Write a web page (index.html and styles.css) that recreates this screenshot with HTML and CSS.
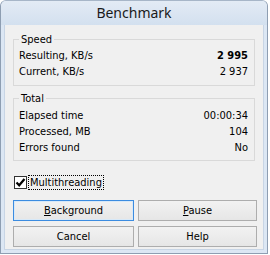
FILE: index.html
```html
<!DOCTYPE html>
<html>
<head>
<meta charset="utf-8">
<link rel="stylesheet" href="styles.css">
</head>
<body>
<div class="window">
  <div class="titlebar">Benchmark</div>
  <div class="body">
    <fieldset class="group group-speed">
      <legend>Speed</legend>
      <div class="row"><span>Resulting, KB/s</span><span class="strong">2 995</span></div>
      <div class="row"><span>Current, KB/s</span><span>2 937</span></div>
    </fieldset>
    <fieldset class="group group-total">
      <legend>Total</legend>
      <div class="row"><span>Elapsed time</span><span>00:00:34</span></div>
      <div class="row"><span>Processed, MB</span><span>104</span></div>
      <div class="row"><span>Errors found</span><span>No</span></div>
    </fieldset>
    <div class="check">
      <span class="box"><svg width="11" height="11" viewBox="0 0 11 11"><path d="M1.5 5.5 L4.2 8.3 L9.5 2" fill="none" stroke="#000" stroke-width="2.2"/></svg></span>
      <span class="check-label">Multithreading</span>
    </div>
    <div class="buttons">
      <button class="btn btn-default"><u>B</u>ackground</button>
      <button class="btn"><u>P</u>ause</button>
      <button class="btn">Cancel</button>
      <button class="btn">Help</button>
    </div>
  </div>
</div>
</body>
</html>
```
FILE: styles.css
```css
html, body {
  margin: 0;
  padding: 0;
  background: #ffffff;
}
body {
  font-family: "DejaVu Sans Condensed", "DejaVu Sans", sans-serif;
  font-size: 11px;
  color: #000;
}
.window {
  width: 268px;
  height: 254px;
  box-sizing: border-box;
  border: 1px solid #8e9eb2;
  border-top-color: #a7b6c8;
  border-radius: 6px 6px 0 0;
  background: #dce7f4;
  display: flex;
  flex-direction: column;
}
.titlebar {
  height: 24px;
  flex: none;
  background: linear-gradient(#e3ebf5, #d3e0ef);
  border-radius: 5px 5px 0 0;
  font-family: "Noto Sans", sans-serif;
  font-size: 14px;
  line-height: 24px;
  text-align: center;
  color: #1a1a1a;
}
.body {
  flex: 1;
  margin: 0 3px 3px 3px;
  background: #f0f0f0;
  border: 1px solid #c8d5e5;
  border-top: none;
  padding: 8px 8px 0 8px;
  display: flex;
  flex-direction: column;
}
.group {
  margin: 0;
  padding: 2px 6px 5px 5px;
  border: 1px solid #d9d9d9;
  border-radius: 0;
}
.group legend {
  padding: 0 2px;
  line-height: 13px;
}
.group-total {
  margin-top: 6px;
  padding-top: 3px;
  padding-bottom: 4px;
}
.row {
  display: flex;
  justify-content: space-between;
  height: 16px;
  line-height: 16px;
}
.strong {
  font-weight: bold;
}
.check {
  display: flex;
  align-items: center;
  margin-top: 14px;
  margin-left: 1px;
  height: 15px;
}
.box {
  width: 11px;
  height: 11px;
  border: 1px solid #333;
  background: #fff;
  display: flex;
}
.check-label {
  margin-left: 1px;
  border: 1px dotted #000;
  padding: 0 1px;
  line-height: 13px;
}
.buttons {
  margin-top: 10px;
  display: grid;
  grid-template-columns: 121px 119px;
  column-gap: 4px;
  row-gap: 5px;
}
.btn {
  height: 21px;
  margin: 0;
  padding: 0;
  font-family: inherit;
  font-size: 11px;
  color: #000;
  border: 1px solid #adadad;
  background: linear-gradient(#f2f2f2, #e6e6e6);
  border-radius: 0;
}
.btn-default {
  border-color: #3c8ce0;
  box-shadow: inset 0 0 0 1px #d8e9f8;
}
```
